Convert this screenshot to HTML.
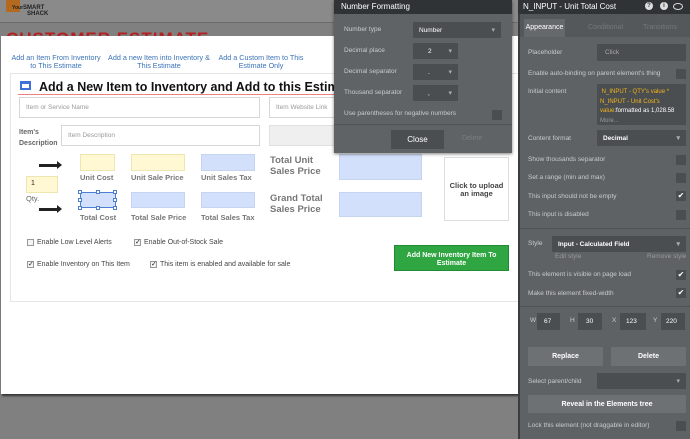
<!DOCTYPE html>
<html><head><meta charset="utf-8"><style>
*{margin:0;padding:0;box-sizing:border-box}
body{width:690px;height:439px;overflow:hidden;background:#808080;font-family:"Liberation Sans",sans-serif;position:relative}
.a{position:absolute}
.t{position:absolute;white-space:nowrap}
.lnk{position:absolute;color:#3b73b9;font-size:7.2px;text-align:center;line-height:8px;white-space:nowrap}
.inp{position:absolute;border:1px solid #d6d6d6;background:#fff;font-size:6.5px;color:#999;padding:0 6px;display:flex;align-items:center}
.y{position:absolute;background:#fff8d2;border:1px solid #eee6b0}
.b{position:absolute;background:#d2e0fb;border:1px solid #c5d4f0}
.lbl{position:absolute;font-size:7.5px;color:#777;font-weight:bold;white-space:nowrap}
.big{position:absolute;font-size:9.5px;color:#777;font-weight:bold;line-height:11px}
.cb{position:absolute;font-size:7px;color:#444;white-space:nowrap;display:flex;align-items:center}
.cb i{display:inline-block;width:7px;height:7px;border:1px solid #999;background:#f4f4f4;margin-right:3px;font-style:normal;font-size:7px;line-height:5px;color:#222;text-align:center}
.arr{position:absolute;width:20px;height:3px;background:#222}
.arr:after{content:"";position:absolute;right:-3px;top:-3px;border-left:5px solid #222;border-top:4.5px solid transparent;border-bottom:4.5px solid transparent}
.p{position:absolute;font-size:6.5px;color:#c9cbcd;white-space:nowrap}
.f{position:absolute;background:#4a4e51;font-size:6.5px;color:#fff;display:flex;align-items:center;padding-left:6px;white-space:nowrap}
.ck{position:absolute;width:10px;height:10px;background:#4a4e51;color:#fff;font-size:8px;line-height:10px;text-align:center}
.dd:after{content:"▾";position:absolute;right:6px;font-size:7px;color:#aaa}
.btn{position:absolute;background:#6d7174;color:#fff;font-size:7px;font-weight:bold;display:flex;align-items:center;justify-content:center}
.h{position:absolute;height:1px;background:#4e5255}
</style></head><body>
<div class="a" style="left:0;top:0;width:690px;height:22px;background:#8a8a8a"></div>
<div class="a" style="left:6px;top:0;width:14px;height:12px;background:#b36a1f"></div>
<div class="t" style="left:12px;top:5px;font-size:5px;font-weight:bold;color:#222">Your<span style="font-size:6px">SMART</span></div>
<div class="t" style="left:27px;top:11px;font-size:6px;font-weight:bold;color:#222">SHACK</div>
<div class="a" style="left:0;top:22px;width:690px;height:1px;background:#6a6a6a"></div>
<div class="t" style="left:6px;top:29px;font-size:17px;font-weight:bold;color:#b42020;letter-spacing:1px">CUSTOMER ESTIMATE</div>
<div class="a" style="left:1px;top:36px;width:517px;height:358px;background:#fff;box-shadow:1px 2px 2px rgba(0,0,0,.6)"></div>
<div class="lnk" style="left:8px;top:54px;width:96px">Add an Item From Inventory<br>to This Estimate</div>
<div class="lnk" style="left:104px;top:54px;width:110px">Add a new Item into Inventory &amp;<br>This Estimate</div>
<div class="lnk" style="left:214px;top:54px;width:94px">Add a Custom Item to This<br>Estimate Only</div>
<div class="a" style="left:10px;top:73px;width:508px;height:229px;border:1px solid #e6e6e6;border-right:none"></div>
<div class="a" style="left:20px;top:81px;width:11px;height:9px;border:2px solid #3f6fd8;border-top-width:3px"></div>
<div class="t" style="left:39px;top:80px;font-size:12.5px;font-weight:bold;color:#111">Add a New Item to Inventory and Add to this Estimate</div>
<div class="a" style="left:18px;top:94px;width:318px;height:1px;background:#f08080"></div>
<div class="inp" style="left:19px;top:97px;width:241px;height:21px">Item or Service Name</div>
<div class="inp" style="left:269px;top:97px;width:80px;height:21px">Item Website Link</div>
<div class="t" style="left:19px;top:127px;font-size:7px;font-weight:bold;color:#666;line-height:11px">Item's<br>Description</div>
<div class="inp" style="left:61px;top:125px;width:199px;height:21px">Item Description</div>
<div class="a" style="left:269px;top:125px;width:80px;height:21px;background:#efefef;border:1px solid #e0e0e0"></div>
<div class="arr" style="left:39px;top:164px"></div>
<div class="arr" style="left:39px;top:208px"></div>
<div class="y" style="left:80px;top:154px;width:35px;height:17px"></div>
<div class="y" style="left:131px;top:154px;width:54px;height:17px"></div>
<div class="b" style="left:201px;top:154px;width:54px;height:17px"></div>
<div class="lbl" style="left:80px;top:173px">Unit Cost</div>
<div class="lbl" style="left:131px;top:173px">Unit Sale Price</div>
<div class="lbl" style="left:201px;top:173px">Unit Sales Tax</div>
<div class="y" style="left:26px;top:176px;width:32px;height:17px;font-size:7px;color:#222;padding:3px 4px">1</div>
<div class="lbl" style="left:26px;top:194px;font-weight:normal;color:#666">Qty.</div>
<div class="b" style="left:80px;top:192px;width:36px;height:16px;border:1px solid #4a7fd4"></div>
<div class="a" style="left:78px;top:190px;width:4px;height:4px;border:1px solid #4a7fd4;background:#fff"></div>
<div class="a" style="left:96px;top:190px;width:4px;height:4px;border:1px solid #4a7fd4;background:#fff"></div>
<div class="a" style="left:113px;top:190px;width:4px;height:4px;border:1px solid #4a7fd4;background:#fff"></div>
<div class="a" style="left:78px;top:198px;width:4px;height:4px;border:1px solid #4a7fd4;background:#fff"></div>
<div class="a" style="left:113px;top:198px;width:4px;height:4px;border:1px solid #4a7fd4;background:#fff"></div>
<div class="a" style="left:78px;top:206px;width:4px;height:4px;border:1px solid #4a7fd4;background:#fff"></div>
<div class="a" style="left:96px;top:206px;width:4px;height:4px;border:1px solid #4a7fd4;background:#fff"></div>
<div class="a" style="left:113px;top:206px;width:4px;height:4px;border:1px solid #4a7fd4;background:#fff"></div>
<div class="b" style="left:131px;top:192px;width:54px;height:16px"></div>
<div class="b" style="left:201px;top:192px;width:54px;height:16px"></div>
<div class="lbl" style="left:80px;top:213px">Total Cost</div>
<div class="lbl" style="left:131px;top:213px">Total Sale Price</div>
<div class="lbl" style="left:201px;top:213px">Total Sales Tax</div>
<div class="big" style="left:270px;top:155px">Total Unit<br>Sales Price</div>
<div class="big" style="left:270px;top:193px">Grand Total<br>Sales Price</div>
<div class="b" style="left:339px;top:154px;width:83px;height:26px"></div>
<div class="b" style="left:339px;top:192px;width:83px;height:25px"></div>
<div class="a" style="left:444px;top:157px;width:65px;height:64px;border:1px solid #ddd;font-size:7.5px;font-weight:bold;color:#444;text-align:center;padding-top:24px;line-height:8px">Click to upload<br>an image</div>
<div class="cb" style="left:27px;top:239px"><i></i>Enable Low Level Alerts</div>
<div class="cb" style="left:134px;top:239px"><i>✓</i>Enable Out-of-Stock Sale</div>
<div class="cb" style="left:27px;top:261px"><i>✓</i>Enable Inventory on This Item</div>
<div class="cb" style="left:150px;top:261px"><i>✓</i>This item is enabled and available for sale</div>
<div class="a" style="left:394px;top:245px;width:115px;height:26px;background:#2fa642;border:1px solid #238a34;color:#fff;font-size:7px;font-weight:bold;text-align:center;line-height:7.5px;padding-top:6px">Add New Inventory Item To<br>Estimate</div>
<div class="a" style="left:334px;top:0;width:178px;height:153px;background:#5f6366;box-shadow:0 1px 3px rgba(0,0,0,.5)"></div>
<div class="a" style="left:334px;top:0;width:178px;height:14px;background:#2f3336"></div>
<div class="t" style="left:341px;top:2px;font-size:8px;color:#fff">Number Formatting</div>
<div class="p" style="left:344px;top:26px">Number type</div>
<div class="f dd" style="left:413px;top:22px;width:88px;height:16px">Number</div>
<div class="p" style="left:344px;top:47px">Decimal place</div>
<div class="f dd" style="left:413px;top:43px;width:45px;height:16px;padding-left:15px">2</div>
<div class="p" style="left:344px;top:68px">Decimal separator</div>
<div class="f dd" style="left:413px;top:64px;width:45px;height:16px;padding-left:15px">.</div>
<div class="p" style="left:344px;top:89px">Thousand separator</div>
<div class="f dd" style="left:413px;top:85px;width:45px;height:16px;padding-left:15px">,</div>
<div class="p" style="left:344px;top:110px">Use parentheses for negative numbers</div>
<div class="ck" style="left:492px;top:110px"></div>
<div class="h" style="left:334px;top:124px;width:178px"></div>
<div class="a" style="left:391px;top:130px;width:53px;height:19px;background:#4a4e51;color:#fff;font-size:8px;display:flex;align-items:center;justify-content:center">Close</div>
<div class="t" style="left:462px;top:135px;font-size:7px;color:#7a7e81">Delete</div>
<div class="a" style="left:518px;top:0;width:172px;height:439px;background:#5e6265;border-left:2px solid #3a3d40"></div>
<div class="a" style="left:518px;top:0;width:172px;height:14px;background:#2f3336"></div>
<div class="t" style="left:523px;top:2px;font-size:8px;color:#fff">N_INPUT - Unit Total Cost</div>
<div class="a" style="left:645px;top:2px;width:8px;height:8px;border-radius:50%;background:#ddd;font-size:6px;font-weight:bold;text-align:center;line-height:8px;color:#333">?</div>
<div class="a" style="left:660px;top:2px;width:8px;height:8px;border-radius:50%;background:#ddd;font-size:6px;font-weight:bold;text-align:center;line-height:8px;color:#333">i</div>
<div class="a" style="left:673px;top:3px;width:10px;height:7px;border-radius:50%;border:1px solid #ddd"></div>
<div class="a" style="left:520px;top:14px;width:170px;height:23px;background:#54585b"></div>
<div class="a" style="left:524px;top:19px;width:41px;height:18px;background:#65696c;color:#fff;font-size:7px;text-align:center;line-height:18px">Appearance</div>
<div class="t" style="left:588px;top:24px;font-size:7px;color:#74787b">Conditional</div>
<div class="t" style="left:643px;top:24px;font-size:7px;color:#74787b">Transitions</div>
<div class="p" style="left:528px;top:49px">Placeholder</div>
<div class="f" style="left:597px;top:44px;width:89px;height:17px;color:#aaa;padding-left:8px">Click</div>
<div class="p" style="left:528px;top:70px">Enable auto-binding on parent element's thing</div>
<div class="ck" style="left:676px;top:69px"></div>
<div class="p" style="left:528px;top:88px">Initial content</div>
<div class="f" style="left:597px;top:84px;width:89px;height:41px;display:block;padding:4px 3px;font-size:6px;line-height:9.5px;color:#f3b51b">&nbsp;N_INPUT - QTY's value *<br>N_INPUT - Unit Cost's<br>value<span style="color:#fff">:formatted as 1,028.58</span><br><span style="color:#999">More...</span></div>
<div class="p" style="left:528px;top:135px">Content format</div>
<div class="f dd" style="left:597px;top:130px;width:89px;height:16px;font-weight:bold">Decimal</div>
<div class="p" style="left:528px;top:156px">Show thousands separator</div><div class="ck" style="left:676px;top:155px"></div>
<div class="p" style="left:528px;top:174px">Set a range (min and max)</div><div class="ck" style="left:676px;top:173px"></div>
<div class="p" style="left:528px;top:193px">This input should not be empty</div><div class="ck" style="left:676px;top:191px">✔</div>
<div class="p" style="left:528px;top:211px">This input is disabled</div><div class="ck" style="left:676px;top:210px"></div>
<div class="h" style="left:520px;top:228px;width:170px"></div>
<div class="p" style="left:528px;top:240px">Style</div>
<div class="f dd" style="left:552px;top:236px;width:134px;height:16px;font-weight:bold">Input - Calculated Field</div>
<div class="p" style="left:555px;top:253px;color:#999">Edit style</div>
<div class="p" style="left:647px;top:253px;color:#999">Remove style</div>
<div class="p" style="left:528px;top:271px">This element is visible on page load</div><div class="ck" style="left:676px;top:270px">✔</div>
<div class="p" style="left:528px;top:290px">Make this element fixed-width</div><div class="ck" style="left:676px;top:288px">✔</div>
<div class="h" style="left:520px;top:306px;width:170px"></div>
<div class="p" style="left:530px;top:317px">W</div><div class="f" style="left:537px;top:313px;width:23px;height:17px;padding-left:7px">67</div>
<div class="p" style="left:570px;top:317px">H</div><div class="f" style="left:578px;top:313px;width:24px;height:17px;padding-left:8px">30</div>
<div class="p" style="left:612px;top:317px">X</div><div class="f" style="left:620px;top:313px;width:26px;height:17px;padding-left:6px">123</div>
<div class="p" style="left:653px;top:317px">Y</div><div class="f" style="left:661px;top:313px;width:24px;height:17px;padding-left:5px">220</div>
<div class="btn" style="left:528px;top:347px;width:75px;height:19px">Replace</div>
<div class="btn" style="left:611px;top:347px;width:75px;height:19px">Delete</div>
<div class="p" style="left:528px;top:378px">Select parent/child</div>
<div class="f dd" style="left:597px;top:373px;width:89px;height:16px"></div>
<div class="btn" style="left:528px;top:395px;width:158px;height:18px">Reveal in the Elements tree</div>
<div class="p" style="left:528px;top:422px">Lock this element (not draggable in editor)</div><div class="ck" style="left:676px;top:421px"></div>
</body></html>
